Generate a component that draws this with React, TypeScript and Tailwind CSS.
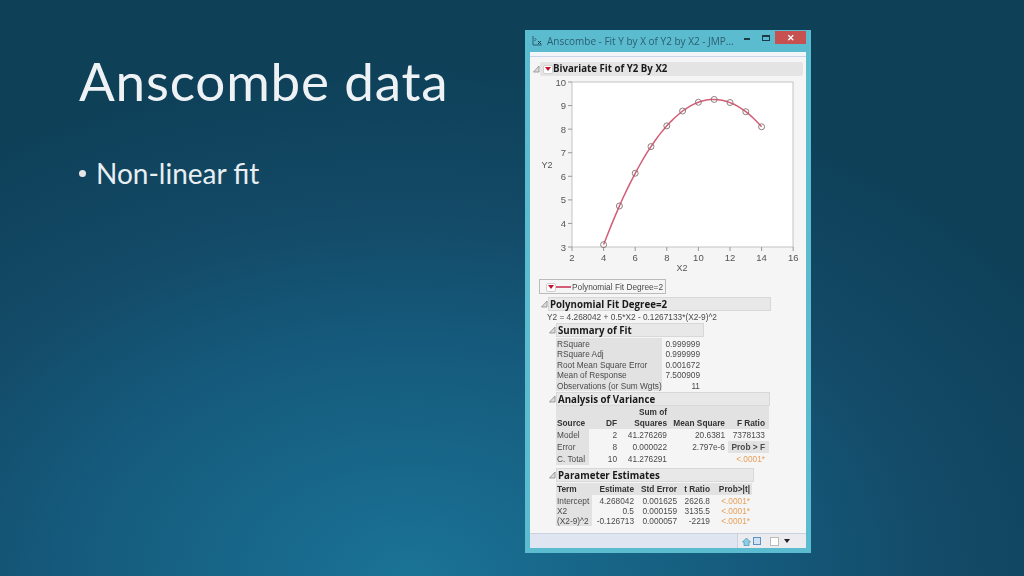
const points: [number, number][] = [
  [4, 3.1], [5, 4.74], [6, 6.13], [7, 7.26], [8, 8.14], [9, 8.77],
  [10, 9.14], [11, 9.26], [12, 9.13], [13, 8.74], [14, 8.1],
];

// chart coords are page pixels minus the svg origin (531, 76)
const px = (x: number) => 41 + (x - 2) * 15.8;
const py = (y: number) => 171 - (y - 3) * 23.57;

function Chart() {
  const curve: string[] = [];
  for (let x = 4; x <= 14.001; x += 0.25) {
    const y = 4.268042 + 0.5 * x - 0.1267133 * (x - 9) * (x - 9);
    curve.push(`${px(x).toFixed(1)},${py(y).toFixed(1)}`);
  }
  return (
    <svg width="274" height="203" viewBox="0 0 274 203" className="block">
      <rect x="41" y="6" width="221" height="165" fill="#fff" stroke="#c4c4c4" />
      {[3, 4, 5, 6, 7, 8, 9, 10].map((t) => (
        <g key={t}>
          <line x1="37" x2="41" y1={py(t)} y2={py(t)} stroke="#999" />
          <text x="35" y={py(t) + 3.5} textAnchor="end" fontSize="9.5" fill="#555">{t}</text>
        </g>
      ))}
      {[2, 4, 6, 8, 10, 12, 14, 16].map((t) => (
        <g key={t}>
          <line x1={px(t)} x2={px(t)} y1="171" y2="175" stroke="#999" />
          <text x={px(t)} y="185" textAnchor="middle" fontSize="9.5" fill="#555">{t}</text>
        </g>
      ))}
      <text x="16" y="92" textAnchor="middle" fontSize="9" fill="#555">Y2</text>
      <text x="151" y="195" textAnchor="middle" fontSize="9" fill="#555">X2</text>
      <polyline points={curve.join(" ")} fill="none" stroke="#d45c76" strokeWidth="1.5" />
      {points.map(([x, y]) => (
        <circle key={x} cx={px(x)} cy={py(y)} r="3" fill="none" stroke="#85706f" strokeWidth="0.9" />
      ))}
    </svg>
  );
}

function Disclosure() {
  return (
    <svg width="7" height="8" viewBox="0 0 7 8" className="shrink-0">
      <path d="M6 1 L0.5 7 H6 Z" fill="#ddd" stroke="#8a8a8a" strokeWidth="0.8" />
    </svg>
  );
}

function RedMenu() {
  return (
    <span className="flex h-[9px] w-[10px] shrink-0 items-center justify-center rounded-[2px] border border-[#cfcfcf] bg-white">
      <span className="h-0 w-0 border-x-[3.5px] border-t-[4px] border-x-transparent border-t-[#c8102e]" />
    </span>
  );
}

function Outline({ title, width }: { title: string; width: string }) {
  return (
    <div className="flex items-center">
      <Disclosure />
      <div className={`flex h-[14px] items-center ${width} border border-[#d8d8d8] bg-[#e8e8e8] pl-[1px] pt-[2px] font-['Open_Sans',sans-serif] text-[9.7px] font-bold text-[#1a1a1a]`}>
        {title}
      </div>
    </div>
  );
}

const fitRows = [
  ["RSquare", "0.999999"],
  ["RSquare Adj", "0.999999"],
  ["Root Mean Square Error", "0.001672"],
  ["Mean of Response", "7.500909"],
  ["Observations (or Sum Wgts)", "11"],
];

const anovaRows = [
  ["Model", "2", "41.276269", "20.6381", "7378133"],
  ["Error", "8", "0.000022", "2.797e-6", "Prob > F"],
  ["C. Total", "10", "41.276291", "", "<.0001*"],
];

const paramRows = [
  ["Intercept", "4.268042", "0.001625", "2626.8", "<.0001*"],
  ["X2", "0.5", "0.000159", "3135.5", "<.0001*"],
  ["(X2-9)^2", "-0.126713", "0.000057", "-2219", "<.0001*"],
];

export default function App() {
  return (
    <div className="flex h-[576px] w-[1024px] overflow-hidden bg-[radial-gradient(ellipse_75%_90%_at_40%_100%,#1a7396_0%,#155a7c_45%,#134a67_70%,#0e4058_100%)] font-['Lato',sans-serif] text-[#eef2f5]">
      {/* Slide text */}
      <div className="w-[525px] shrink-0 pl-[79px] pt-[46px]">
        <h1 className="text-[53px] font-normal leading-[70px] tracking-[0.8px]">Anscombe data</h1>
        <div className="mt-[37px] flex items-center gap-[11px] text-[28px] leading-[40px] text-[#e8eef2]">
          <span className="h-[7px] w-[7px] rounded-full bg-[#e6e6e6]" />
          <span className="-ml-[1px]">Non-linear fit</span>
        </div>
      </div>

      {/* JMP window */}
      <div className="mt-[30px] flex h-[523px] w-[286px] shrink-0 flex-col bg-[#5bbcd0] px-[5px] pb-[5px] font-['Liberation_Sans',sans-serif] text-[#4a4a4a] blur-[0.3px]">
        <div className="flex h-[22px] shrink-0 items-center font-['Open_Sans',sans-serif] text-[10px] text-[#2b5f70]">
          <svg width="12" height="12" viewBox="0 0 12 12" className="ml-[1px] mr-[4px] shrink-0">
            <path d="M2 1 V10 H11" fill="none" stroke="#2b5f70" strokeWidth="1" />
            <path d="M7 6 L10 9 M10 6 L7 9" stroke="#1d3b47" strokeWidth="1" />
            <path d="M3.5 3 L5 4.5 L3.5 6" fill="none" stroke="#1d3b47" strokeWidth="0.8" />
          </svg>
          <span className="flex-1 truncate">Anscombe - Fit Y by X of Y2 by X2 - JMP...</span>
          <span className="mb-[4px] ml-[9px] mr-[12px] h-[1.5px] w-[6px] shrink-0 bg-[#1d3b47]" />
          <span className="mb-[7px] mr-[5px] h-[6px] w-[8px] shrink-0 border border-t-2 border-[#1d3b47]" />
          <span className="mb-[7px] flex h-[13px] w-[31px] shrink-0 items-center justify-center bg-[#c75050] text-[9px] font-bold text-white">✕</span>
        </div>
        <div className="flex min-h-0 flex-1 flex-col bg-[#f5f5f5]">
          <div className="h-[5px] shrink-0 border-b border-[#c8d4ee] bg-[#f2f5fa]" />
          <div className="ml-[3px] mt-[5px] flex items-center">
            <Disclosure />
            <div className="flex h-[14px] w-[263px] items-center gap-0 rounded-[2px] bg-[#e4e4e4] pl-[3px] font-['Open_Sans',sans-serif] text-[9.7px] font-bold text-[#1a1a1a]">
              <RedMenu />
              Bivariate Fit of Y2 By X2
            </div>
          </div>
          <div className="ml-[1px]">
            <Chart />
          </div>
          <div className="ml-[9px] flex h-[15px] w-[127px] items-center whitespace-nowrap border border-[#bbb] pl-[6px] pt-[1px] text-[8.3px]">
            <RedMenu />
            <span className="mr-px h-[2px] w-[15px] bg-[#d45c76]" />
            Polynomial Fit Degree=2
          </div>
          <div className="ml-[11px] mt-[3px]">
            <Outline title="Polynomial Fit Degree=2" width="w-[223px]" />
          </div>
          <div className="ml-[17px] h-[12px] whitespace-nowrap pt-[1px] text-[8.3px] leading-[11px]">Y2 = 4.268042 + 0.5*X2 - 0.1267133*(X2-9)^2</div>

          <div className="ml-[19px]">
            <Outline title="Summary of Fit" width="w-[148px]" />
            <div className="ml-[7px] mt-[1px] flex text-[8.3px] leading-[10.4px]">
              <div className="w-[106px] bg-[#e2e2e2] pl-[1px] pt-[1px]">
                {fitRows.map((r) => (
                  <div key={r[0]} className="whitespace-nowrap">{r[0]}</div>
                ))}
              </div>
              <div className="w-[38px] pt-[1px] text-right">
                {fitRows.map((r) => (
                  <div key={r[0]}>{r[1]}</div>
                ))}
              </div>
            </div>
          </div>

          <div className="ml-[19px] mt-[1px]">
            <Outline title="Analysis of Variance" width="w-[214px]" />
            <table className="ml-[7px] border-collapse text-[8.3px] leading-[11px]">
              <thead className="bg-[#e2e2e2] text-[#333]">
                <tr className="h-[23px] align-bottom font-bold">
                  <td className="w-[33px] pl-[1px]">Source</td>
                  <td className="w-[32px] pr-[4px] text-right">DF</td>
                  <td className="w-[48px] pr-[2px] text-right">Sum of<br />Squares</td>
                  <td className="w-[59px] pr-[3px] text-right">Mean Square</td>
                  <td className="w-[41px] pr-[4px] text-right">F Ratio</td>
                </tr>
              </thead>
              <tbody className="[&_td]:pt-[1px]">
                {anovaRows.map((r) => (
                  <tr key={r[0]} className="h-[12px]">
                    <td className="bg-[#e2e2e2] pl-[1px]">{r[0]}</td>
                    <td className="pr-[4px] text-right">{r[1]}</td>
                    <td className="pr-[2px] text-right">{r[2]}</td>
                    <td className="pr-[3px] text-right">{r[3]}</td>
                    <td className={r[4] === "Prob > F" ? "bg-[#e2e2e2] pr-[4px] text-right font-bold" : r[4].startsWith("<") ? "pr-[4px] text-right text-[#e8a05a]" : "pr-[4px] text-right"}>
                      {r[4]}
                    </td>
                  </tr>
                ))}
              </tbody>
            </table>
          </div>

          <div className="ml-[19px] mt-[3px]">
            <Outline title="Parameter Estimates" width="w-[198px]" />
            <table className="ml-[7px] mt-[1px] border-collapse text-[8.3px] leading-[10px]">
              <thead className="bg-[#e2e2e2] text-[#333]">
                <tr className="h-[12px] font-bold">
                  <td className="w-[36px] pl-[1px]">Term</td>
                  <td className="w-[44px] pr-[2px] text-right">Estimate</td>
                  <td className="w-[42px] pr-[1px] text-right">Std Error</td>
                  <td className="w-[33px] pr-[1px] text-right">t Ratio</td>
                  <td className="w-[41px] pr-[2px] text-right">Prob&gt;|t|</td>
                </tr>
              </thead>
              <tbody>
                {paramRows.map((r, i) => (
                  <tr key={r[0]} className={i === 0 ? "h-[11px] align-bottom" : "h-[10px]"}>
                    <td className="whitespace-nowrap bg-[#e2e2e2] pl-[1px]">{r[0]}</td>
                    <td className="pr-[2px] text-right">{r[1]}</td>
                    <td className="pr-[1px] text-right">{r[2]}</td>
                    <td className="pr-[1px] text-right">{r[3]}</td>
                    <td className="pr-[2px] text-right text-[#e8a05a]">{r[4]}</td>
                  </tr>
                ))}
              </tbody>
            </table>
          </div>

          {/* Status bar */}
          <div className="mt-auto flex h-[15px] shrink-0 border-t border-[#c8d2e0] bg-[#dfe6f1]">
            <div className="flex-1" />
            <div className="flex w-[69px] items-center border-l border-[#c8d2e0] bg-[#ececf0] pl-[4px]">
              <svg width="9" height="9" viewBox="0 0 9 9" className="shrink-0">
                <path d="M4.5 1 L8.5 5 H7 V8.5 H2 V5 H0.5 Z" fill="#8fcde0" stroke="#2e8bb0" strokeWidth="0.6" />
              </svg>
              <svg width="8" height="8" viewBox="0 0 8 8" className="ml-[2px] shrink-0">
                <rect x="0.5" y="0.5" width="7" height="7" fill="#cfe2f3" stroke="#5b93c4" />
              </svg>
              <span className="ml-[9px] h-[9px] w-[9px] shrink-0 border border-[#bbb] bg-white" />
              <span className="ml-[5px] h-0 w-0 shrink-0 border-x-[3px] border-t-[4px] border-x-transparent border-t-[#222]" />
            </div>
          </div>
        </div>
      </div>
    </div>
  );
}
